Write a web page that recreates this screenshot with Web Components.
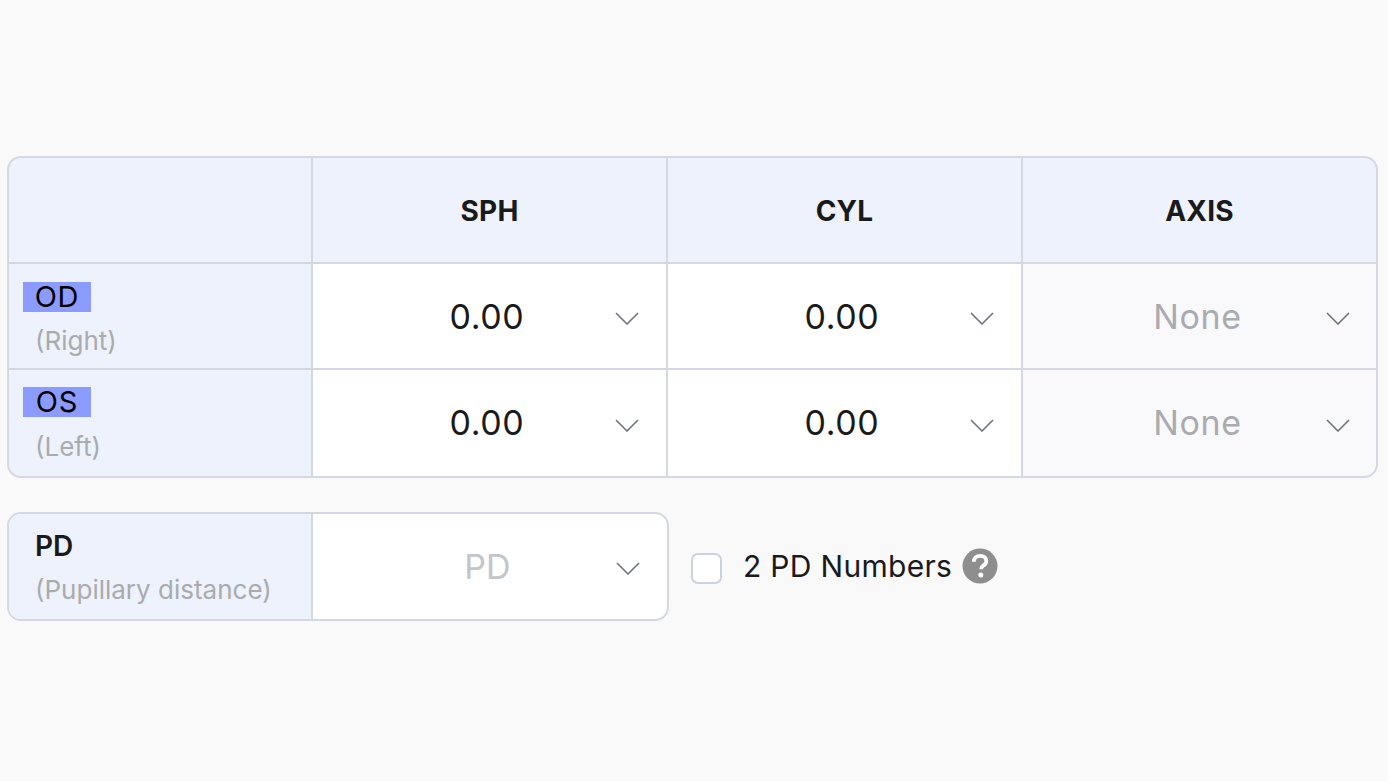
<!DOCTYPE html>
<html lang="en"><head><meta charset="utf-8"><title>Prescription</title>
<style>
html,body{margin:0;height:100%}
body{background:#f9f9f9;font-family:Inter,"Liberation Sans",sans-serif;color:#1a1a1a;overflow:hidden}
rx-page{display:block}
</style></head><body>
<rx-page>
  <rx-table>
    <rx-head slot="cell" class="c"></rx-head>
    <rx-head slot="cell">SPH</rx-head>
    <rx-head slot="cell">CYL</rx-head>
    <rx-head slot="cell">AXIS</rx-head>
    <rx-eye slot="cell" sub="(Right)">OD</rx-eye>
    <rx-select slot="cell" value="0.00"></rx-select>
    <rx-select slot="cell" value="0.00"></rx-select>
    <rx-select slot="cell" value="None" disabled></rx-select>
    <rx-eye slot="cell" sub="(Left)" last>OS</rx-eye>
    <rx-select slot="cell" value="0.00" last></rx-select>
    <rx-select slot="cell" value="0.00" last></rx-select>
    <rx-select slot="cell" value="None" disabled last></rx-select>
  </rx-table>
  <rx-pd-row></rx-pd-row>
</rx-page>
<script>
const chevron=`<svg width="26" height="14" viewBox="0 0 26 14" fill="none" aria-hidden="true"><path d="M2 2 L13 13 L24 2" stroke="#6f7480" stroke-width="1.6"/></svg>`;
function def(name,html){
  customElements.define(name,class extends HTMLElement{
    connectedCallback(){
      if(this.shadowRoot)return;
      const r=this.attachShadow({mode:'open'});
      r.innerHTML=typeof html==='function'?html(this):html;
    }
  });
}
def('rx-page',`<style>:host{display:block;padding:156px 10px 0 7px}</style><slot></slot>`);
def('rx-table',`<style>
:host{display:block}
.t{display:grid;grid-template-columns:304px 355px 355px 353px;grid-template-rows:106px 106px 106px;
border:2px solid #d5d8e2;border-radius:14px;overflow:hidden;background:#d5d8e2;width:1367px}
</style><div class="t"><slot name="cell"></slot></div>`);
def('rx-head',`<style>
:host{display:flex;align-items:center;justify-content:center;background:#edf2fd;font-size:28px;font-weight:700;letter-spacing:.2px;color:#1a1a1a;
border-right:2px solid #d5d8e2;border-bottom:2px solid #d5d8e2;box-sizing:border-box;padding-top:2px}
:host(:nth-child(4)){border-right:0}
</style><slot></slot>`);
def('rx-eye',h=>{const last=h.hasAttribute('last');return `<style>
:host{display:flex;flex-direction:column;align-items:flex-start;background:#edf2fd;box-sizing:border-box;
border-right:2px solid #d5d8e2;border-bottom:${last?0:'2px solid #d5d8e2'};padding:${last?17:18}px 0 0 14px}
.m{display:block;background:#8b9bff;color:#000;font-size:29px;line-height:30px;height:30px;width:68px;text-align:center;font-weight:400;letter-spacing:.8px}
.s{font-size:26px;line-height:30px;color:#aaabad;margin:${last?15:14}px 0 0 12px}
</style><span class="m"><slot></slot></span><span class="s">${h.getAttribute('sub')}</span>`});
def('rx-select',h=>{const d=h.hasAttribute('disabled'),last=h.hasAttribute('last');return `<style>
:host{display:flex;align-items:center;box-sizing:border-box;background:${d?'#f9f9fb':'#fff'};
border-right:2px solid #d5d8e2;border-bottom:${last?0:'2px solid #d5d8e2'};padding:0 26px 0 0}
:host(:nth-child(4n)){border-right:0;padding-right:25px}
.v{flex:1;text-align:center;font-size:34px;line-height:40px;letter-spacing:.6px;color:${d?'#a9abb0':'#1a1a1a'};padding:${last?0:2}px 0 0 47px}
svg{display:block;margin-top:3px}
</style><span class="v">${h.getAttribute('value')}</span>${chevron}`});
def('rx-pd-row',`<style>
:host{display:flex;align-items:center;margin-top:34px}
.b{display:grid;grid-template-columns:304px 354px;height:105px;border:2px solid #d5d8e2;border-radius:14px;overflow:hidden;background:#fff}
.l{background:#edf2fd;border-right:2px solid #d5d8e2;box-sizing:border-box;padding:16px 0 0 26px}
.t{font-size:28px;font-weight:600;line-height:32px;color:#1a1a1a}
.s{font-size:26px;line-height:30px;color:#aaabad;margin-top:13px;white-space:nowrap}
.f{display:flex;align-items:center;padding-right:26px}
.v{flex:1;text-align:center;font-size:34px;color:#c3c5ca;padding-left:47px}
.f svg{margin-top:3px;display:block}
.cb{width:27px;height:27px;border:2px solid #ccd0df;border-radius:7px;background:#fff;margin:3px 0 0 22px}
.lb{font-size:30px;margin:0 0 2px 21px;letter-spacing:.3px;color:#1a1a1a;white-space:nowrap}
.q{margin:0 0 2px 10px;display:block}
</style>
<div class="b"><div class="l"><div class="t">PD</div><div class="s">(Pupillary distance)</div></div>
<div class="f"><span class="v">PD</span>${chevron}</div></div>
<div class="cb"></div><span class="lb">2 PD Numbers</span>
<svg class="q" width="36" height="36" viewBox="0 0 36 36" aria-hidden="true"><circle cx="18" cy="18" r="17.5" fill="#8e8e8e"/><path d="M11.8 13.8c0-3.8 2.7-6 6.400-6 3.600 0 6.100 2.100 6.100 5.100 0 2.300-1.200 3.500-3 4.700-1.600 1.100-2.200 1.800-2.200 3.600" fill="none" stroke="#fff" stroke-width="3.800"/><circle cx="18.800" cy="27" r="2.500" fill="#fff"/></svg>`);
</script>
</body></html>
